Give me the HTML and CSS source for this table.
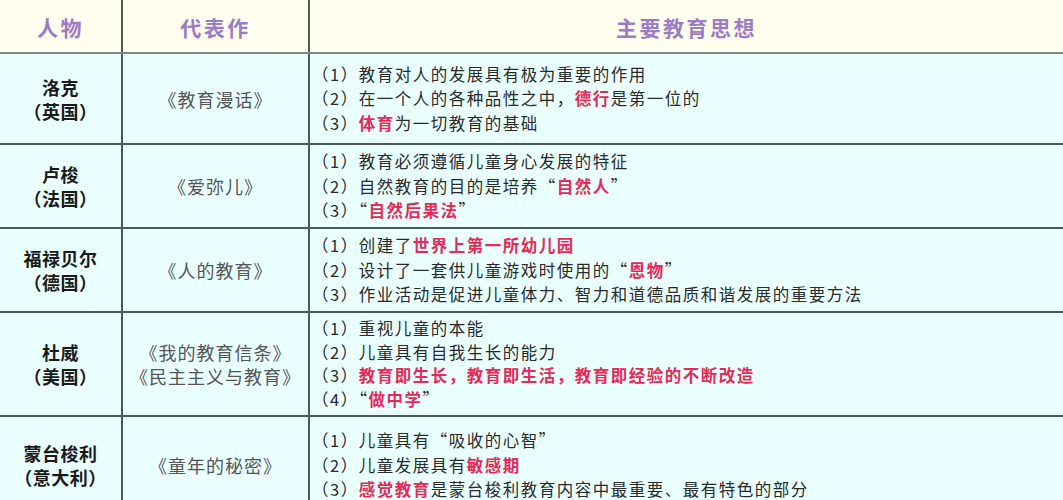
FILE: index.html
```html
<!DOCTYPE html>
<html lang="zh-CN">
<head>
<meta charset="utf-8">
<title>教育思想</title>
<link rel="stylesheet" href="styles.css">
</head>
<body>
<table class="grid">
  <colgroup>
    <col class="c-name">
    <col class="c-book">
    <col class="c-idea">
  </colgroup>
  <thead>
    <tr class="r-head">
      <th>人物</th>
      <th>代表作</th>
      <th>主要教育思想</th>
    </tr>
  </thead>
  <tbody>
    <tr class="r1">
      <td class="name">洛克<br>（英国）</td>
      <td class="book">《教育漫话》</td>
      <td class="idea">
        <div>（1）教育对人的发展具有极为重要的作用</div>
        <div>（2）在一个人的各种品性之中，<b>德行</b>是第一位的</div>
        <div>（3）<b>体育</b>为一切教育的基础</div>
      </td>
    </tr>
    <tr class="r2">
      <td class="name">卢梭<br>（法国）</td>
      <td class="book">《爱弥儿》</td>
      <td class="idea">
        <div>（1）教育必须遵循儿童身心发展的特征</div>
        <div>（2）自然教育的目的是培养“<b>自然人</b>”</div>
        <div>（3）“<b>自然后果法</b>”</div>
      </td>
    </tr>
    <tr class="r3">
      <td class="name">福禄贝尔<br>（德国）</td>
      <td class="book">《人的教育》</td>
      <td class="idea">
        <div>（1）创建了<b>世界上第一所幼儿园</b></div>
        <div>（2）设计了一套供儿童游戏时使用的“<b>恩物</b>”</div>
        <div>（3）作业活动是促进儿童体力、智力和道德品质和谐发展的重要方法</div>
      </td>
    </tr>
    <tr class="r4">
      <td class="name">杜威<br>（美国）</td>
      <td class="book">《我的教育信条》<br>《民主主义与教育》</td>
      <td class="idea tight">
        <div>（1）重视儿童的本能</div>
        <div>（2）儿童具有自我生长的能力</div>
        <div>（3）<b>教育即生长，教育即生活，教育即经验的不断改造</b></div>
        <div>（4）“<b>做中学</b>”</div>
      </td>
    </tr>
    <tr class="r5">
      <td class="name">蒙台梭利<br>（意大利）</td>
      <td class="book">《童年的秘密》</td>
      <td class="idea">
        <div>（1）儿童具有“吸收的心智”</div>
        <div>（2）儿童发展具有<b>敏感期</b></div>
        <div>（3）<b>感觉教育</b>是蒙台梭利教育内容中最重要、最有特色的部分</div>
      </td>
    </tr>
  </tbody>
</table>
</body>
</html>
```

FILE: styles.css
```css
html, body {
  margin: 0;
  padding: 0;
  background: #eaffff;
  overflow: hidden;
}

.grid {
  table-layout: fixed;
  border-collapse: collapse;
  width: 1067px;
  margin: -2px 0 0 -2px;
  font-family: "Noto Sans CJK SC", "Noto Sans", sans-serif;
}

.c-name { width: 123px; }
.c-book { width: 187px; }
.c-idea { width: auto; }

.grid th,
.grid td {
  border: 2px solid #4a5a58;
  padding: 0;
  vertical-align: middle;
}

.grid tbody tr {
  border-top: 2px solid #233a38;
}

.r-head th {
  background: #fffdee;
  color: #9c7cc4;
  font-size: 21px;
  font-weight: bold;
  letter-spacing: 2.5px;
  text-align: center;
  height: 50px;
  padding-top: 2px;
  border-bottom: 2px solid #7e8884;
}

.grid tbody td {
  background: #eaffff;
}

.r1 td { height: 89px; }
.r2 td { height: 82px; }
.r3 td { height: 82px; }
.r4 td { height: 102px; }
.r5 td { height: 96px; }

.name {
  text-align: center;
  font-size: 18px;
  font-weight: bold;
  color: #1a1a1a;
  line-height: 24px;
  letter-spacing: 0.5px;
}

.book {
  text-align: center;
  font-size: 18px;
  color: #555;
  line-height: 24px;
  letter-spacing: 1px;
}

.idea {
  padding-left: 2px !important;
  font-size: 16.5px;
  color: #2a2a2a;
  line-height: 24.5px;
  letter-spacing: 1.5px;
}

.idea.tight {
  line-height: 23.5px;
}

.idea b {
  color: #e62a58;
  font-weight: bold;
}
```
